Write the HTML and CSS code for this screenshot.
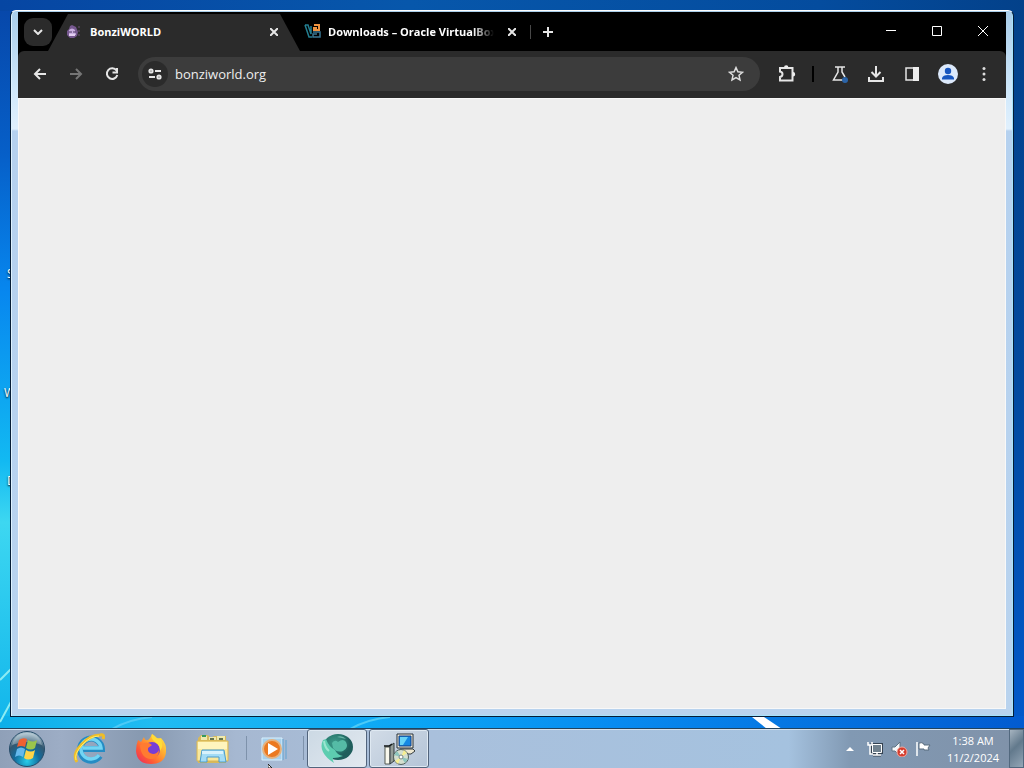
FILE: index.html
```html
<!DOCTYPE html>
<html lang="en">
<head>
<meta charset="utf-8">
<title>BonziWORLD</title>
<link rel="stylesheet" href="styles.css">
</head>
<body>
<div class="desktop">
  <svg class="wallpaper" viewBox="0 0 1024 768" preserveAspectRatio="none" aria-hidden="true">
    <defs>
      <linearGradient id="side" x1="0" y1="0" x2="0" y2="1">
        <stop offset="0" stop-color="#0746a8"/><stop offset=".2" stop-color="#065fc8"/>
        <stop offset=".38" stop-color="#0787ef"/><stop offset=".6" stop-color="#12b9f2"/>
        <stop offset=".68" stop-color="#3dd7f1"/><stop offset="1" stop-color="#08aeea"/>
      </linearGradient>
      <linearGradient id="right" x1="0" y1="0" x2="0" y2="1">
        <stop offset="0" stop-color="#034189"/><stop offset=".5" stop-color="#024a9f"/><stop offset="1" stop-color="#025bd0"/>
      </linearGradient>
      <linearGradient id="top"><stop offset="0" stop-color="#0646a3"/><stop offset=".4" stop-color="#0757ab"/><stop offset=".8" stop-color="#044c9e"/><stop offset="1" stop-color="#03418a"/></linearGradient>
      <linearGradient id="base"><stop offset="0" stop-color="#0cafe9"/><stop offset=".15" stop-color="#20bcf2"/><stop offset=".4" stop-color="#0ba6f5"/><stop offset=".6" stop-color="#078bf0"/><stop offset="1" stop-color="#025bd0"/></linearGradient>
    </defs>
    <rect width="512" height="768" fill="url(#side)"/>
    <rect x="512" width="512" height="768" fill="url(#right)"/>
    <rect width="1024" height="11" fill="url(#top)"/>
    <rect y="716" width="1024" height="52" fill="url(#base)"/>
    <path d="M0 680L12 668M0 722L12 700" fill="none" stroke="#8cecf3" stroke-width="2"/>
    <path d="M112 729Q130 719 152 717M350 729Q368 719 390 717" fill="none" stroke="#4ccaf6" stroke-width="2"/>
    <path d="M752 717H764L782 729H767Z" fill="#fff"/>
  </svg>
  <span class="shortcut shortcut-a">S</span>
  <span class="shortcut shortcut-b">W</span>
  <span class="shortcut shortcut-c">D</span>

  <main class="window">
    <div class="browser">
      <header class="tabstrip">
        <button class="tab-search" aria-label="Search tabs"><svg width="10" height="6" viewBox="0 0 10 6"><path d="M1 1l4 4 4-4" class="line"/></svg></button>
        <div class="tab tab-active">
          <svg class="favicon" width="16" height="16" viewBox="0 0 16 16"><path d="M4 2L6 1l4 2 2 5-1 4-3 2H4L1 11V7l2-2Z" fill="#76588f"/><path d="M3 6q3-3 6 0l1 5H3Z" fill="#c9afe0"/><path d="M3 8h3M7 8h3" stroke="#4a3262" stroke-width="1"/><path d="M3 11h6" stroke="#e4d0f2" stroke-width="2"/><path d="M13 2v2M13 6v2M13 10v2" stroke="#6b5175"/></svg>
          <span class="tab-title">BonziWORLD</span>
          <button class="tab-close" aria-label="Close BonziWORLD"><svg width="8" height="8" viewBox="0 0 8 8"><path d="M0 0l8 8M8 0L0 8" class="line"/></svg></button>
        </div>
        <div class="tab tab-second">
          <svg class="favicon" width="17" height="16" viewBox="0 0 17 16"><path d="M1 1h3l3 9V2M1 1l4 12h3" fill="none" stroke="#237f91" stroke-width="1.5"/><path d="M10 1h5v5h-5V4h3" fill="none" stroke="#ef9340" stroke-width="2"/><path d="M9 8h7v5H9v-3h4" fill="none" stroke="#397692" stroke-width="1.5"/></svg>
          <span class="tab-title tab-fade">Downloads – Oracle VirtualBox</span>
          <button class="tab-close" aria-label="Close Downloads"><svg width="8" height="8" viewBox="0 0 8 8"><path d="M0 0l8 8M8 0L0 8" class="line"/></svg></button>
        </div>
        <span class="tab-divider"></span>
        <button class="new-tab" aria-label="New tab"><svg width="10" height="10" viewBox="0 0 10 10"><path d="M5 0v10M0 5h10" class="line"/></svg></button>
        <div class="caption">
          <button aria-label="Minimize"><svg width="10" height="10" viewBox="0 0 10 10"><path d="M0 3.5h10" class="thin"/></svg></button>
          <button aria-label="Maximize"><svg width="10" height="12" viewBox="0 0 10 12"><path d="M.5.5h9v9h-9Z" class="thin"/></svg></button>
          <button aria-label="Close"><svg width="10" height="12" viewBox="0 0 10 12"><path d="M0 0l10 10M10 0L0 10" class="thin"/></svg></button>
        </div>
      </header>
      <nav class="toolbar" aria-label="Browser toolbar">
        <button class="tool" aria-label="Back"><svg width="16" height="16" viewBox="0 0 16 16"><path d="M14 8H3M8 3L3 8l5 5" class="line"/></svg></button>
        <button class="tool tool-off" aria-label="Forward" disabled><svg width="16" height="16" viewBox="0 0 16 16"><path d="M2 8h11M8 3l5 5-5 5" class="line"/></svg></button>
        <button class="tool" aria-label="Reload"><svg width="16" height="16" viewBox="0 0 16 16"><path d="M12.5 4.5A5.3 5.3 0 1 0 13.3 9M13 2v4.5H8.5" class="line"/></svg></button>
        <div class="omnibox">
          <button class="site-info" aria-label="Site information"><svg width="14" height="12" viewBox="0 0 14 12"><circle cx="3" cy="3" r="1.6" class="line"/><circle cx="11" cy="9" r="1.6" class="line"/><path d="M7 3h6M1 9h6" class="line"/></svg></button>
          <input class="address" type="text" value="bonziworld.org" aria-label="Address">
          <button class="star" aria-label="Bookmark"><svg width="16" height="16" viewBox="0 0 16 16"><path d="M8 1.6l1.9 4.2 4.6.5L11 9.3l1 4.6-4-2.4-4 2.4 1-4.6-3.5-3 4.6-.5Z" fill="none" stroke="#dedede" stroke-width="1.5"/></svg></button>
        </div>
        <button class="tool" aria-label="Extensions"><svg width="20" height="20" viewBox="0 0 20 20"><path d="M3 4H15.5V16.5H3V13q2.5-.5 2.5-2.7T3 7.6Z" class="line"/><path d="M7 3.5a2.2 2.2 0 0 1 4.4 0ZM16 8a2.2 2.2 0 0 1 0 4.4Z" fill="#eee"/></svg></button>
        <span class="tool-divider"></span>
        <button class="tool" aria-label="Experiments"><svg width="20" height="20" viewBox="0 0 20 20"><path d="M5 3h10M8 3v5L3.5 16H14M12 3v5l3 5" class="line slim"/><circle cx="15" cy="16" r="3" fill="#2b64a8"/></svg></button>
        <button class="tool" aria-label="Downloads"><svg width="18" height="18" viewBox="0 0 18 18"><path d="M9 1v10M4.5 7L9 11.5 13.5 7M2 12v4h14v-4" class="line"/></svg></button>
        <button class="tool" aria-label="Side panel"><svg width="16" height="16" viewBox="0 0 16 16"><path d="M2 2h12v12H2Z" class="line slim"/><path d="M9 1h6v14H9Z" fill="#eee"/></svg></button>
        <button class="tool" aria-label="Profile"><svg width="20" height="20" viewBox="0 0 20 20"><circle cx="10" cy="10" r="10" fill="#dce9fb"/><circle cx="10" cy="7" r="3.2" fill="#1756bf"/><path d="M4 15.5V14q1-3 6-3t6 3v1.5Z" fill="#1756bf"/></svg></button>
        <button class="tool" aria-label="Menu"><svg width="4" height="16" viewBox="0 0 4 16"><g fill="#ddd"><circle cx="2" cy="2.5" r="1.5"/><circle cx="2" cy="8" r="1.5"/><circle cx="2" cy="13.5" r="1.5"/></g></svg></button>
      </nav>
      <section class="page" aria-label="Page content"></section>
    </div>
  </main>

  <footer class="taskbar">
    <button class="task start" aria-label="Start"><svg width="38" height="38" viewBox="0 0 38 38">
      <defs><radialGradient id="orb" cx=".5" cy=".85" r=".8"><stop offset="0" stop-color="#28cce9"/><stop offset=".45" stop-color="#126b9c"/><stop offset=".75" stop-color="#345870"/><stop offset="1" stop-color="#a4bbc8"/></radialGradient></defs>
      <circle cx="19" cy="19" r="17.5" fill="url(#orb)" stroke="#264d6a"/><path d="M4 15Q7 3 19 3t15 12Q19 9 4 15Z" fill="#dceaf0" opacity=".35"/>
      <path d="M11 10q4-3 8-1l-2 8q-4-2-8 0Z" fill="#ef6132"/><path d="M20 10q5 3 9 0l-2 8q-4 3-9 0Z" fill="#9ac54c"/><path d="M9 19q4-3 8 0l-2 8q-4-3-8 0Z" fill="#66b9ec"/><path d="M18 20q5 3 9 0l-2 8q-5 3-9 0Z" fill="#ffd447"/></svg></button>
    <button class="task pinned" aria-label="Internet Explorer"><svg width="32" height="32" viewBox="0 0 32 32"><path d="M27 23a11 11 0 1 1 2-7H9" fill="none" stroke="#258cc4" stroke-width="6"/><path d="M26 22a10 10 0 1 1 2-7H10" fill="none" stroke="#72d5f4" stroke-width="3.5"/><path d="M4 29Q-1 22 8 12T27 2Q32 1 30 6" fill="none" stroke="#efbd28" stroke-width="3"/><path d="M3 27Q1 21 9 12T26 3" fill="none" stroke="#fff06a"/></svg></button>
    <button class="task pinned" aria-label="Firefox"><svg width="32" height="32" viewBox="0 0 32 32"><defs><linearGradient id="fox" x1="1" y1="0" x2="0" y2="1"><stop offset="0" stop-color="#fff446"/><stop offset=".4" stop-color="#ffa42f"/><stop offset=".7" stop-color="#ff5935"/><stop offset="1" stop-color="#e72369"/></linearGradient></defs><path d="M3 7L6 9l3-5q1 4 4 3 2-1 4-6 4 2 5 5 3-1 4-1 6 6 5 14-1 12-15 12T1 18q0-6 2-11Z" fill="url(#fox)"/><circle cx="17" cy="17" r="8" fill="#763dd5"/><path d="M5 12q7-5 12 0l-4 3q-1 5 5 6 4 0 6-4 0 10-9 9Q6 25 5 12Z" fill="#ff7b31"/><path d="M17 1q-2 4 3 8 5 3 5 9 4-5 1-12l-4-1Z" fill="#ffdb38"/></svg></button>
    <button class="task pinned" aria-label="File Explorer"><svg width="34" height="32" viewBox="0 0 34 32"><path d="M2 5l3-3h7l3 3 3-2h12v27H2Z" fill="#d7b95c"/><path d="M5 3h6v4H5M13 4h7v3h-7M21 3h8v4h-8" fill="#eee9ae"/><path d="M6 3h4" stroke="#36995d" stroke-width="2"/><path d="M14 6h4M23 6h4" stroke="#65734d" stroke-width="2"/><path d="M1 8h31v20H1Z" fill="#f9e89d" stroke="#d9b653"/><path d="M2 9h29v7H2Z" fill="#fff5bd"/><path d="M6 17h22l2 12h-7v-5H11v5H4Z" fill="#a3dcf5" stroke="#4a9ccc"/><path d="M6 18h21v3H6Z" fill="#d8f2fb"/></svg></button>
    <span class="bar-line"></span>
    <button class="task player" aria-label="Media Player"><svg width="28" height="28" viewBox="0 0 28 28"><path d="M2 3h20v22H2Z" fill="#a8d0eb" stroke="#d6f0ff"/><path d="M23 4v21M26 5v19" stroke="#60a3d1"/><circle cx="12" cy="14" r="9" fill="#eb7920" stroke="#e5b27f" stroke-width="2"/><path d="M8 8l10 6-10 6Z" fill="#fff"/></svg></button>
    <span class="bar-line"></span>
    <button class="task running running-active" aria-label="Browser"><svg width="34" height="34" viewBox="0 0 34 34"><defs><radialGradient id="globe" cx=".4" cy=".35"><stop offset="0" stop-color="#3f9c8c"/><stop offset=".6" stop-color="#2c8074"/><stop offset="1" stop-color="#1f5e5c"/></radialGradient></defs><ellipse cx="18" cy="15" rx="15" ry="13" fill="url(#globe)"/><path d="M3 8Q0 14 3 20t11 11q-2-3-1-5 5 0 10-2-6-1-8-6Q9 15 6 7Z" fill="#5dcdb0"/><path d="M12 11q3-4 6-1 5-4 8 0 3 6-3 9-6 2-10-3Z" fill="#55bba6"/><path d="M4 9q1 7 5 10" fill="none" stroke="#9be5d0" stroke-width="2"/><path d="M17 5q5-2 9 2-4-1-9-2Z" fill="#69b7a8"/></svg></button>
    <button class="task running" aria-label="Installer"><svg width="34" height="34" viewBox="0 0 34 34"><path d="M15 2h16v14H15Z" fill="#f2edda" stroke="#26313b"/><path d="M17 4h12v10H17Z" fill="#1588e3" stroke="#153d80"/><path d="M18 5h8l-5 8h-3Z" fill="#68d3f7"/><path d="M18 17h13l2 2-4 3H18Z" fill="#eee8d1" stroke="#343b3e"/><path d="M3 15h5v17H3Z" fill="#f8f8ed" stroke="#535953"/><path d="M8 14l4-3v18l-4 3Z" fill="#949d98" stroke="#353f42"/><path d="M2 14h5l3-2" fill="none" stroke="#101515" stroke-width="1.5"/><circle cx="19" cy="25" r="7.5" fill="#d5dfcf" stroke="#52605c"/><path d="M19 25l3-7 3 3ZM19 25l-3 7-3-3Z" fill="#f7ef92"/><path d="M19 25l7 2-3 4ZM19 25l-7-2 3-4Z" fill="#8dc5bd"/><circle cx="19" cy="25" r="2" fill="#fff" stroke="#758583"/></svg></button>
    <div class="tray">
      <button class="tray-up" aria-label="Show hidden icons"><svg width="8" height="5" viewBox="0 0 8 5"><path d="M0 5l4-4 4 4Z" fill="#fff"/></svg></button>
      <button class="tray-icon" aria-label="Network"><svg width="16" height="16" viewBox="0 0 16 16"><path d="M5 3.5h9.5v8H5ZM6 14h8M10 12v2" fill="none" stroke="#344251" stroke-width="3"/><path d="M5.5 3.5h9v8h-9Z" fill="#71828f" stroke="#fff"/><path d="M6 14h8M10 12v2" stroke="#fff" stroke-width="1.5"/><path d="M1 1v3h4V1M3 4v9h3" fill="none" stroke="#fff" stroke-width="1.5"/></svg></button>
      <button class="tray-icon" aria-label="Volume muted"><svg width="17" height="16" viewBox="0 0 17 16"><path d="M1 6h3l5-5v14l-5-5H1Z" fill="#f5f7f9" stroke="#607484"/><circle cx="11" cy="11" r="5" fill="#d53d2e" stroke="#f1aaa1"/><path d="M9 9l4 4M13 9l-4 4" stroke="#fff" stroke-width="1.5"/></svg></button>
      <button class="tray-icon" aria-label="Action Center"><svg width="16" height="16" viewBox="0 0 16 16"><path d="M2 1v14" stroke="#fff" stroke-width="1.5"/><path d="M4 2q3-1 5 1v1h6l-2 3 1 2H9V8H4Z" fill="#fff" stroke="#596c7e"/></svg></button>
      <time class="clock" datetime="2024-11-02T01:38"><span>1:38 AM</span><span>11/2/2024</span></time>
      <button class="show-desktop" aria-label="Show desktop"></button>
    </div>
  </footer>
  <svg class="pointer" width="4" height="4" viewBox="0 0 4 4" aria-hidden="true"><path d="M0 0l4 4H0Z" fill="#fff" stroke="#222"/></svg>
</div>
</body>
</html>
```
FILE: styles.css
```css
* { box-sizing: border-box; }
body { margin: 0; font-family: "Open Sans", "Noto Sans", sans-serif; font-size: 12px; }
button { display: flex; align-items: center; justify-content: center; flex: none; margin: 0; padding: 0; border: 0; background: none; color: inherit; }
svg { display: block; flex: none; }
.line { fill: none; stroke: #e6e6e6; stroke-width: 2; }
.slim { stroke-width: 1.5; }
.thin { fill: none; stroke: #fff; stroke-width: 1; }

.desktop { position: relative; display: flex; flex-direction: column; height: 100vh; overflow: hidden; background: #0787ef; }
.wallpaper { position: absolute; inset: 0; width: 100%; height: 100%; }
.shortcut { position: absolute; color: #fff; font-size: 12px; line-height: 16px; text-shadow: 0 1px 2px #000; }
.shortcut-a { left: 7px; top: 266px; }
.shortcut-b { left: 4px; top: 385px; }
.shortcut-c { left: 7px; top: 473px; }

.window {
  position: relative; display: flex; flex: 1; min-height: 0;
  margin: 10px 10px 11px; padding: 1px 7px 7px;
  border: 1px solid #071d36; border-top-color: #fff; border-radius: 6px 6px 0 0;
  background: linear-gradient(#a9cde9 0, #d0e8fb 80px, #e0f0fd 118px, #b5d1ef 120px, #b9d3ee);
  box-shadow: inset 1px 0 #def2ff, inset -1px -1px #a5e3fc;
}
.browser { display: flex; flex: 1; flex-direction: column; min-width: 0; background: #000; }
.tabstrip { display: flex; align-items: center; height: 39px; flex: none; padding-left: 6px; color: #fff; }
.tab-search { width: 28px; height: 28px; border-radius: 9px; background: #2b2b2b; }
.tab { display: flex; align-items: center; font-size: 11px; font-weight: 700; line-height: 16px; white-space: nowrap; }
.tab-active { width: 252px; height: 37px; align-self: flex-end; margin-left: -4px; padding: 0 18px 2px; background: #2b2b2b; clip-path: polygon(0 100%, 20px 0, 232px 0, 100% 100%); }
.tab-title { flex: 1; margin-left: 8px; overflow: hidden; }
.tab-fade { flex: none; width: 166px; margin-left: 7px; mask-image: linear-gradient(90deg, #000 145px, transparent); }
.tab-close { width: 16px; height: 20px; }
.tab-second { margin-left: 4px; }
.tab-second .tab-close { margin-left: 10px; }
.tab-divider { width: 1px; height: 14px; margin-left: 10px; background: #484848; }
.new-tab { width: 28px; height: 28px; margin-left: 3px; }
.caption { display: flex; margin-left: auto; }
.caption button { width: 46px; height: 36px; }

.toolbar { display: flex; align-items: center; height: 47px; flex: none; padding: 0 4px 2px; border-radius: 6px 6px 0 0; background: #2b2b2b; }
.tool { width: 36px; height: 36px; }
.tool-off { opacity: .4; }
.omnibox { display: flex; flex: 1; align-items: center; min-width: 0; height: 34px; margin: 0 9px 0 8px; padding: 0 8px 0 4px; border-radius: 17px; background: #3c3c3c; }
.site-info { width: 26px; height: 26px; border-radius: 13px; background: #2b2b2b; }
.address { flex: 1; min-width: 0; margin: 0; padding: 0 0 0 7px; border: 0; outline: 0; background: none; color: #eee; font: inherit; font-size: 13px; line-height: 20px; }
.star { width: 32px; height: 32px; }
.tool-divider { width: 2px; height: 16px; margin: 0 8px 0 7px; background: #000; }
.page { flex: 1; border: 1px solid #f8f8f8; background: #eee; }

.taskbar {
  position: relative; display: flex; align-items: stretch; flex: none; height: 40px;
  border-top: 1px solid #21435e;
  background: linear-gradient(90deg, #8fa0b8 0, #9dadc5 6%, #8799b0 14%, #a6b8d1 23%, #a9c0dc 42%, #a5c2df 77%, #8199b3 83%, #8092a9 100%);
  box-shadow: inset 0 1px #d5e2ef;
}
.task { height: 39px; }
.start { width: 54px; }
.pinned { width: 62px; }
.start + .pinned { margin-left: 4px; }
.bar-line { width: 1px; margin: 7px 0 8px 2px; background: #7e92ab; }
.player { width: 54px; }
.running { width: 60px; margin-left: 2px; border: 1px solid #52647c; border-radius: 3px; background: linear-gradient(135deg, #d2dce7, #b4c4d7); box-shadow: inset 0 0 0 1px #dfe9f2; }
.running-active { margin-left: 3px; background: linear-gradient(135deg, #ccd9e4, #e2e9f0); }
.tray { display: flex; align-items: center; margin-left: auto; color: #fff; }
.tray-up { width: 24px; height: 24px; margin-right: 1px; }
.tray-icon { width: 24px; height: 24px; }
.clock { display: flex; flex-direction: column; align-items: center; width: 72px; margin-left: 2px; font-size: 11px; line-height: 17px; }
.show-desktop { width: 15px; height: 39px; border: 1px solid #52687e; background: linear-gradient(135deg, #a6b4c0, #62798c 45%, #94a6b6); }
.pointer { position: absolute; left: 268px; bottom: 0; }
```
